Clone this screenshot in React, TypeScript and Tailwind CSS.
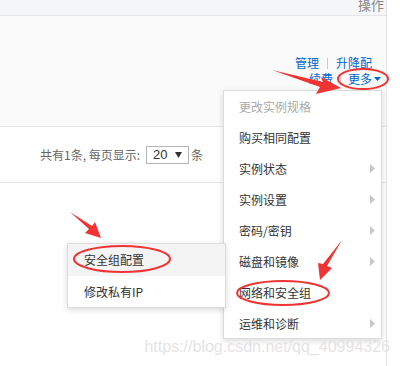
import React from 'react';

const menuItems = [
  { label: '更改实例规格', disabled: true },
  { label: '购买相同配置' },
  { label: '实例状态', sub: true },
  { label: '实例设置', sub: true },
  { label: '密码/密钥', sub: true },
  { label: '磁盘和镜像', sub: true },
  { label: '网络和安全组' },
  { label: '运维和诊断', sub: true },
];

const Caret: React.FC = () => (
  <svg width="5" height="9" viewBox="0 0 5 9" className="fill-[#c8c8c8]">
    <path d="M0 0 L5 4.5 L0 9 Z" />
  </svg>
);

const App: React.FC = () => {
  return (
    <div className="relative w-[400px] h-[366px] overflow-hidden bg-white text-[12px] font-['Noto_Sans_CJK_SC','Noto_Sans',sans-serif]">
      {/* table */}
      <div className="w-[387px] h-full border-r border-[#e3e5e8]">
        <div className="h-[16px] bg-[#f5f6f8] border-b border-[#e3e5e8] flex justify-end pr-[2px]">
          <span className="text-[#888] text-[13px] leading-[13px] -mt-[2px]">操作</span>
        </div>
        <div className="h-[111px] bg-[#fafafa] border-b border-[#e3e5e8] flex flex-col items-end pr-[14px] pt-[39px]">
          <div className="flex items-center leading-[16px] text-[#0066cc]">
            <span>管理</span>
            <span className="mx-[8px] w-px h-[11px] bg-[#ccc]" />
            <span>升降配</span>
          </div>
          <div className="flex items-center leading-[16px] text-[#0066cc] -mr-[9px]">
            <span>续费</span>
            <span className="mx-[7px] w-px h-[11px] bg-[#ccc]" />
            <span>更多</span>
            <svg width="7" height="4" viewBox="0 0 7 4" className="ml-[2px] fill-[#0066cc]">
              <path d="M0 0 H7 L3.5 4 Z" />
            </svg>
          </div>
        </div>
        <div className="h-[56px] border-b border-[#e3e5e8] flex items-center pl-[40px] text-[#666]">
          <span>共有1条, 每页显示:</span>
          <div className="ml-[6px] w-[43px] h-[18px] border border-[#b5b5b5] flex items-center justify-between px-[6px] text-[#333]">
            <span className="font-['Liberation_Sans',sans-serif] text-[13px]">20</span>
            <svg width="7" height="6" viewBox="0 0 7 6" className="fill-[#333]">
              <path d="M0 0 H7 L3.5 6 Z" />
            </svg>
          </div>
          <span className="ml-[2px]">条</span>
        </div>
      </div>

      {/* dropdown menu */}
      <div className="absolute left-[223px] top-[90px] w-[159px] h-[249px] bg-white border border-[#dcdcdc] shadow-[0_2px_6px_rgba(0,0,0,0.15)]">
        {menuItems.map((item) => (
          <div
            key={item.label}
            className={`h-[31px] flex items-center justify-between pl-[15px] pr-[6px] ${
              item.disabled ? 'text-[#aaa]' : 'text-[#333]'
            }`}
          >
            <span>{item.label}</span>
            {item.sub && <Caret />}
          </div>
        ))}
      </div>

      {/* submenu */}
      <div className="absolute left-[67px] top-[243px] w-[159px] h-[65px] bg-white border border-[#dcdcdc] shadow-[0_2px_6px_rgba(0,0,0,0.15)]">
        <div className="h-[32px] bg-[#f4f4f4] flex items-center pl-[16px] text-[#333]">安全组配置</div>
        <div className="h-[31px] flex items-center pl-[16px] text-[#333]">修改私有IP</div>
      </div>

      {/* annotations */}
      <svg className="absolute inset-0 pointer-events-none" width="400" height="366" viewBox="0 0 400 366">
        <g fill="none" stroke="#f03333" strokeWidth="2">
          <ellipse cx="363" cy="79" rx="25" ry="10" />
          <ellipse cx="122" cy="259" rx="48" ry="13" />
          <ellipse cx="283" cy="293" rx="46" ry="12" />
        </g>
        <g fill="#f03333">
          <path d="M272 70 L323 82 L321 77 L341 88 L316 94 L320 87 Z" />
          <path d="M70 212 L92 226 L95 222 L101 238 L85 233 L89 229 Z" />
          <path d="M342 240 L327 266 L332 268 L320 280 L318 263 L323 264 Z" />
        </g>
      </svg>

      {/* watermark */}
      <div className="absolute right-[10px] top-[337px] text-[16px] leading-[20px] text-[#e4e4e4] font-['Liberation_Sans',sans-serif]">
        https://blog.csdn.net/qq_40994326
      </div>
    </div>
  );
};

export default App;
